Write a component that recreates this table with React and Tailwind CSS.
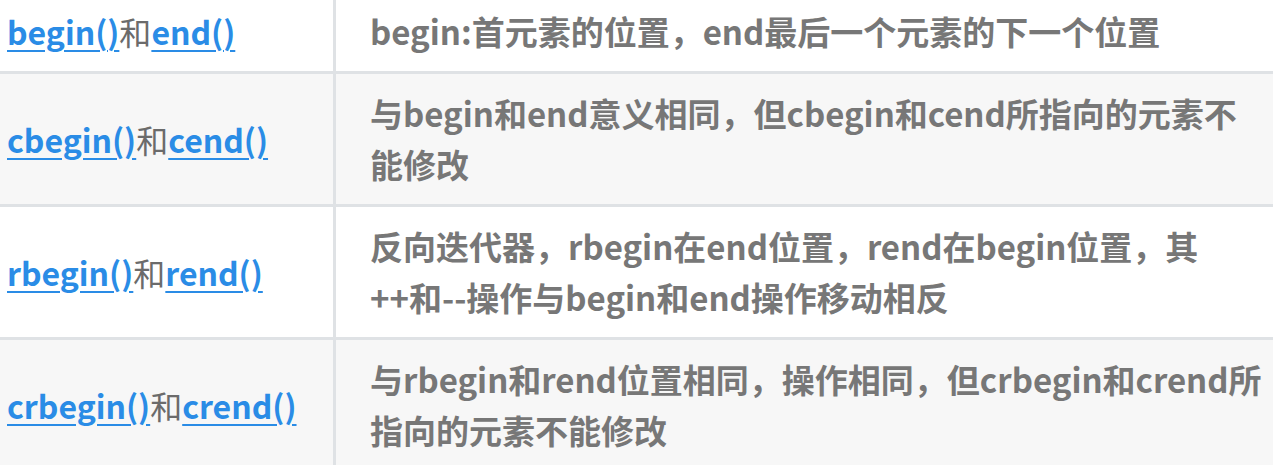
const rows = [
  {
    first: "begin()",
    last: "end()",
    lines: ["begin:首元素的位置，end最后一个元素的下一个位置"],
    bg: "bg-white",
  },
  {
    first: "cbegin()",
    last: "cend()",
    lines: ["与begin和end意义相同，但cbegin和cend所指向的元素不", "能修改"],
    bg: "bg-[#f7f7f7]",
  },
  {
    first: "rbegin()",
    last: "rend()",
    lines: ["反向迭代器，rbegin在end位置，rend在begin位置，其", "++和--操作与begin和end操作移动相反"],
    bg: "bg-white",
  },
  {
    first: "crbegin()",
    last: "crend()",
    lines: ["与rbegin和rend位置相同，操作相同，但crbegin和crend所", "指向的元素不能修改"],
    bg: "bg-[#f7f7f7]",
  },
];

function Row({ row, isFirst }) {
  return (
    <div
      className={`grid grid-cols-[336px_1fr] ${row.bg} ${
        isFirst ? "" : "border-t-[3px] border-[#dfe2e5]"
      }`}
    >
      {/* Method names */}
      <div className="flex items-center border-r-[3px] border-[#dfe2e5] pl-[7px]">
        <span className="text-[32px] leading-[51px] whitespace-nowrap">
          <a
            href="#"
            className="font-semibold text-[#2a8ce6] underline decoration-2 underline-offset-[5px]"
          >
            {row.first}
          </a>
          <span className="text-[#6b6b6b]">和</span>
          <a
            href="#"
            className="font-semibold text-[#2a8ce6] underline decoration-2 underline-offset-[5px]"
          >
            {row.last}
          </a>
        </span>
      </div>

      {/* Description */}
      <div className="py-[14px] pl-[34px] pr-[8px] text-[33px] leading-[51px] font-bold text-[#777777]">
        {row.lines.map((line) => (
          <span key={line} className="block whitespace-nowrap">
            {line}
          </span>
        ))}
      </div>
    </div>
  );
}

export default function App() {
  return (
    <div className="h-[465px] w-full overflow-hidden bg-white font-['Noto_Sans_CJK_SC',sans-serif]">
      <div className="-mt-[8px]">
        {rows.map((row, i) => (
          <Row key={row.first} row={row} isFirst={i === 0} />
        ))}
      </div>
    </div>
  );
}
